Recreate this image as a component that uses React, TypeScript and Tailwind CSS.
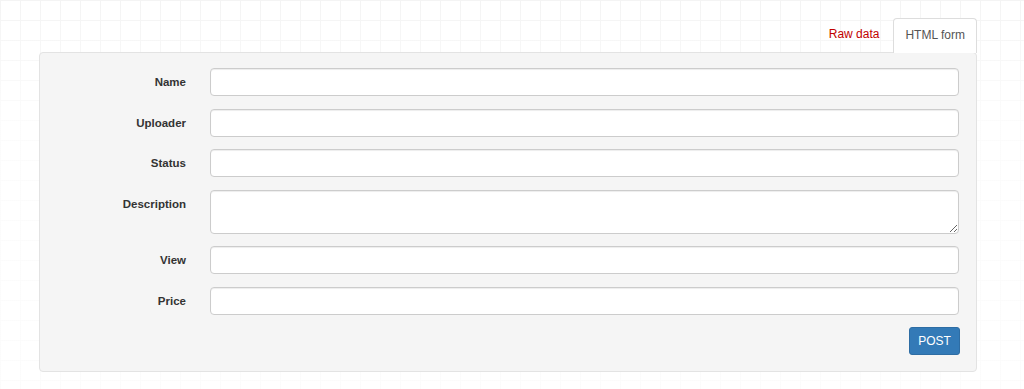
import React from "react";

const fields = [
  { label: "Name", kind: "input" },
  { label: "Uploader", kind: "input" },
  { label: "Status", kind: "input" },
  { label: "Description", kind: "textarea" },
  { label: "View", kind: "input" },
  { label: "Price", kind: "input" },
];

const inputClass =
  "w-[749px] rounded-[4px] border border-[#cccccc] bg-white shadow-[inset_0_1px_1px_rgba(0,0,0,0.075)] outline-none";

export default function App() {
  return (
    <div
      className="h-[389px] w-full overflow-hidden bg-white bg-[linear-gradient(to_bottom,rgba(255,255,255,0)_0px,rgba(255,255,255,0.7)_120px),linear-gradient(#f4f4f4_1px,transparent_1px),linear-gradient(90deg,#f4f4f4_1px,transparent_1px)] bg-[size:100%_100%,20px_20px,20px_20px] text-[#333333]"
      style={{ fontFamily: '"Liberation Sans", Arial, sans-serif' }}
    >
      <div className="ml-[39px] w-[938px] pt-[18px]">
        <div className="flex items-end justify-end text-[12px]">
          <a className="mb-px mr-[1px] px-[13px] py-[9px] leading-[15px] text-[#c20000]" href="#">
            Raw data
          </a>
          <div className="relative -mb-px rounded-t-[4px] border border-b-0 border-[#dddddd] bg-white px-[11px] pt-[9px] pb-[10px] leading-[15px] text-[#555555]">
            HTML form
          </div>
        </div>

        <div className="rounded-[4px] border border-[#e3e3e3] bg-[#f5f5f5] pt-[15px] pb-[16px]">
          <form className="flex flex-col gap-[12.5px]">
            {fields.map((f) => (
              <div key={f.label} className="flex items-start">
                <label className="w-[146px] pt-[7px] text-right text-[11.5px] font-bold leading-[14px] text-[#333333]">
                  {f.label}
                </label>
                <div className="ml-[24px]">
                  {f.kind === "textarea" ? (
                    <textarea className={`${inputClass} block h-[44px] resize-y`} />
                  ) : (
                    <input type="text" className={`${inputClass} block h-[28px]`} />
                  )}
                </div>
              </div>
            ))}
            <div className="flex justify-end pr-[16px]">
              <button
                type="button"
                className="h-[28px] w-[51px] rounded-[3px] border border-[#2e6da4] bg-[#337ab7] text-[12px] text-white"
              >
                POST
              </button>
            </div>
          </form>
        </div>
      </div>
    </div>
  );
}
